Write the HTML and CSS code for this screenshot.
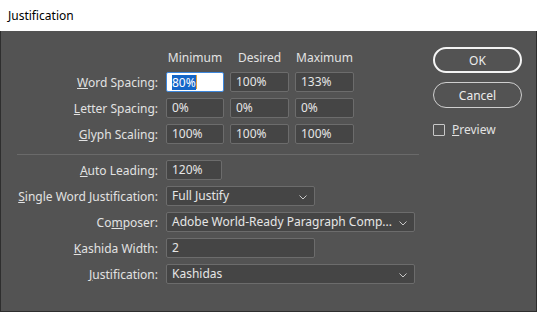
FILE: index.html
```html
<!DOCTYPE html>
<html lang="en">
<head>
    <meta charset="UTF-8">
    <title>Justification</title>
    <link rel="stylesheet" href="styles.css">
</head>
<body>
    <div class="window">
        <div class="titlebar">Justification</div>

        <div class="content">
            <div class="form">
                <!-- Spacing grid -->
                <div class="grid spacing">
                    <div></div>
                    <div class="col-head">Minimum</div>
                    <div class="col-head">Desired</div>
                    <div class="col-head">Maximum</div>

                    <label class="label"><u>W</u>ord Spacing:</label>
                    <div class="field focused"><span class="sel">80%</span><span class="caret"></span></div>
                    <div class="field">100%</div>
                    <div class="field">133%</div>

                    <label class="label"><u>L</u>etter Spacing:</label>
                    <div class="field">0%</div>
                    <div class="field">0%</div>
                    <div class="field">0%</div>

                    <label class="label"><u>G</u>lyph Scaling:</label>
                    <div class="field">100%</div>
                    <div class="field">100%</div>
                    <div class="field">100%</div>
                </div>

                <div class="separator"></div>

                <!-- Other options -->
                <div class="grid options">
                    <label class="label"><u>A</u>uto Leading:</label>
                    <div class="field w-xs">120%</div>

                    <label class="label"><u>S</u>ingle Word Justification:</label>
                    <div class="field select w-md">Full Justify
                        <svg class="chev" width="8" height="5" viewBox="0 0 8 5"><polyline points="0.5,0.5 4,4 7.5,0.5" fill="none" stroke="#c8c8c8" stroke-width="1"/></svg>
                    </div>

                    <label class="label">Co<u>m</u>poser:</label>
                    <div class="field select w-lg">Adobe World-Ready Paragraph Comp...
                        <svg class="chev" width="8" height="5" viewBox="0 0 8 5"><polyline points="0.5,0.5 4,4 7.5,0.5" fill="none" stroke="#c8c8c8" stroke-width="1"/></svg>
                    </div>

                    <label class="label"><u>K</u>ashida Width:</label>
                    <div class="field w-md">2</div>

                    <label class="label"><u>J</u>ustification:</label>
                    <div class="field select w-lg">Kashidas
                        <svg class="chev" width="8" height="5" viewBox="0 0 8 5"><polyline points="0.5,0.5 4,4 7.5,0.5" fill="none" stroke="#c8c8c8" stroke-width="1"/></svg>
                    </div>
                </div>
            </div>

            <div class="actions">
                <button class="btn default">OK</button>
                <button class="btn">Cancel</button>
                <label class="check"><span class="box"></span><u>P</u>review</label>
            </div>
        </div>
    </div>
</body>
</html>
```

FILE: styles.css
```css
body {
    margin: 0;
    font-family: "Noto Sans", "Open Sans", sans-serif;
    font-size: 12px;
}
.window {
    width: 537px;
    height: 312px;
    box-sizing: border-box;
    background: #535353;
    border: 1px solid #2e2e2e;
    border-top: none;
    display: flex;
    flex-direction: column;
}
.titlebar {
    height: 31px;
    background: #ffffff;
    color: #000;
    line-height: 31px;
    padding-left: 8px;
    margin: 0 -1px;
}
.content {
    display: flex;
    padding-top: 19px;
}
.form {
    width: 430px;
}
.grid {
    display: grid;
    column-gap: 6px;
    row-gap: 6px;
    align-items: center;
    color: #e2e2e2;
}
.spacing {
    grid-template-columns: 159px 58px 59px 59px;
    grid-template-rows: 16px 20px 20px 20px;
}
.col-head {
    text-align: center;
    line-height: 16px;
    align-self: start;
}
.label {
    text-align: right;
    padding-right: 2px;
    white-space: nowrap;
}
.field {
    height: 20px;
    box-sizing: border-box;
    background: #454545;
    border: 1px solid #6c6c6c;
    border-radius: 2px;
    padding-left: 5px;
    line-height: 18px;
    color: #e6e6e6;
    white-space: nowrap;
    position: relative;
}
.focused {
    background: #ffffff;
    border-color: #3d87dc;
    display: flex;
    align-items: center;
}
.sel {
    background: #1466c8;
    color: #fff;
    line-height: 15px;
}
.caret {
    width: 1px;
    height: 14px;
    background: #e0a040;
}
.separator {
    height: 1px;
    background: #6a6a6a;
    margin: 10px 0 5px 16px;
    width: 402px;
}
.options {
    grid-template-columns: 159px auto;
    grid-template-rows: repeat(5, 20px);
    justify-items: start;
}
.options .label {
    justify-self: stretch;
}
.w-xs { width: 56px; }
.w-md { width: 149px; }
.w-lg { width: 249px; }
.chev {
    position: absolute;
    right: 7px;
    top: 8px;
}
.actions {
    display: flex;
    flex-direction: column;
    margin-left: 2px;
    margin-top: -3px;
}
.btn {
    width: 89px;
    height: 26px;
    box-sizing: border-box;
    background: transparent;
    color: #ececec;
    font-family: inherit;
    font-size: 12px;
    border: 1px solid #cfcfcf;
    border-radius: 13px;
    margin-bottom: 9px;
    padding: 0;
}
.btn.default {
    border: 2px solid #f4f4f4;
}
.check {
    display: flex;
    align-items: center;
    color: #e2e2e2;
    margin-top: 4px;
}
.box {
    width: 12px;
    height: 12px;
    box-sizing: border-box;
    border: 1px solid #c8c8c8;
    border-radius: 1px;
    margin-right: 7px;
}
```
